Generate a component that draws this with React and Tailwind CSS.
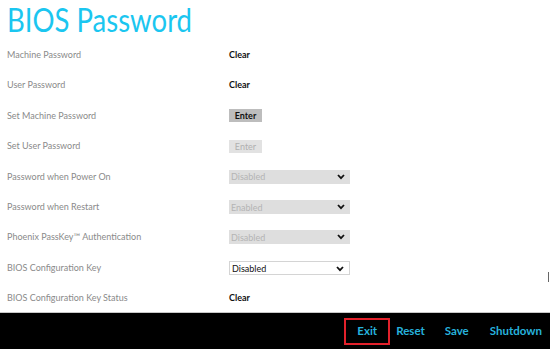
import React from "react";

const Chevron = () => (
  <svg width="8" height="6" viewBox="0 0 8 6" className="absolute right-[5px] top-[4px]">
    <polyline points="1,1 4,4.2 7,1" fill="none" stroke="#111" strokeWidth="1.8" />
  </svg>
);

const Select = ({ value, enabled }) => (
  <div
    className={
      "relative w-[121px] h-[14px] flex items-center pl-[2px] text-[9px] leading-none " +
      (enabled ? "bg-white border border-[#d4d4d4] text-[#111]" : "bg-[#dedede] text-[#b4b4b4]")
    }
  >
    {value}
    <Chevron />
  </div>
);

const rows = [
  { label: "Machine Password", h: "h-[30px]", v: { t: "clear" } },
  { label: "User Password", h: "h-[30px]", v: { t: "clear" } },
  { label: "Set Machine Password", h: "h-[31px]", v: { t: "btn", on: true } },
  { label: "Set User Password", h: "h-[30px]", v: { t: "btn", on: false } },
  { label: "Password when Power On", h: "h-[31px]", v: { t: "sel", val: "Disabled" } },
  { label: "Password when Restart", h: "h-[30px]", v: { t: "sel", val: "Enabled" } },
  { label: "Phoenix PassKey\u2122 Authentication", h: "h-[30px]", v: { t: "sel", val: "Disabled" } },
  { label: "BIOS Configuration Key", h: "h-[32px]", v: { t: "sel", val: "Disabled", on: true } },
  { label: "BIOS Configuration Key Status", h: "h-[28px]", v: { t: "clear" } },
];

function Value({ v }) {
  if (v.t === "clear")
    return <span className="text-[9px] font-bold text-[#111]">Clear</span>;
  if (v.t === "btn")
    return (
      <div
        className={
          "w-[33px] h-[13px] flex items-center justify-center text-[9px] leading-none " +
          (v.on ? "bg-[#bdbdbd] text-[#111] font-bold" : "bg-[#e2e2e2] text-[#b0b0b0]")
        }
      >
        Enter
      </div>
    );
  return <Select value={v.val} enabled={v.on} />;
}

export default function App() {
  return (
    <div
      className="relative w-[550px] h-[349px] bg-white overflow-hidden flex flex-col"
      style={{ fontFamily: 'Lato, "Noto Sans", sans-serif' }}
    >
      <div className="h-[40px] pl-[7px] pt-[1px]">
        <h1 className="text-[32px] leading-[38px] font-normal text-[#1bc6f0] origin-left scale-x-[0.86] whitespace-nowrap">
          BIOS Password
        </h1>
      </div>
      <div className="flex flex-col">
        {rows.map((r, i) => (
          <div key={i} className={"flex items-center " + r.h}>
            <div className="w-[229px] pl-[7px] text-[9px] text-[#8a8a8a]">{r.label}</div>
            <Value v={r.v} />
          </div>
        ))}
      </div>
      <div className="flex-1" />
      <div className="h-[37px] border-t border-[#c8c8c8] bg-black flex items-center justify-end pr-[8px] text-[11.5px] font-bold text-[#27b2dc]">
        <div className="w-[46px] h-[27px] border-2 border-[#e3212b] flex items-center justify-center mr-[6px]">
          Exit
        </div>
        <span className="mr-[20px]">Reset</span>
        <span className="mr-[21px]">Save</span>
        <span>Shutdown</span>
      </div>
      <div className="absolute left-[548px] top-[272px] w-[1px] h-[10px] bg-[#666]" />
    </div>
  );
}
